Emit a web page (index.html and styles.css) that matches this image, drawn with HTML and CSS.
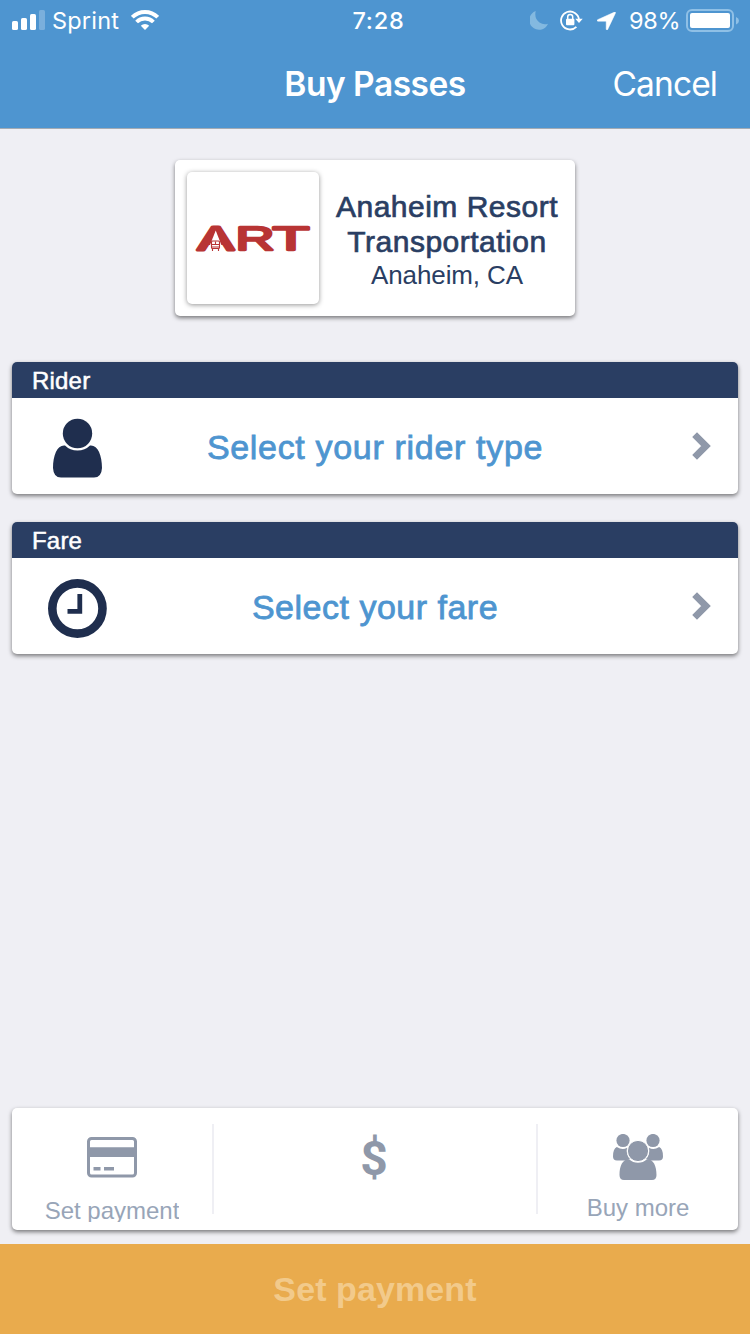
FILE: index.html
```html
<!DOCTYPE html>
<html lang="en">
<head>
<meta charset="utf-8">
<title>Buy Passes</title>
<link rel="stylesheet" href="styles.css">
</head>
<body>
<div class="screen">
  <header class="header">
    <div class="status">
      <div class="status-left">
        <svg class="signal" width="34" height="20" viewBox="0 0 34 20" fill="#fff">
          <rect x="0" y="11" width="6" height="9" rx="1.6"/>
          <rect x="9" y="8" width="6" height="12" rx="1.6"/>
          <rect x="18" y="4" width="6" height="16" rx="1.6"/>
          <rect x="27" y="0" width="6" height="20" rx="1.6" opacity=".25"/>
        </svg>
        <span class="carrier">Sprint</span>
        <svg class="wifi" width="28" height="20" viewBox="0 0 28 20">
          <g fill="none" stroke="#fff" stroke-width="3.9">
            <path d="M1.3 7.2a18 18 0 0 1 25.4 0"/>
            <path d="M5.600 12a11.800 11.800 0 0 1 16.800 0"/>
          </g>
          <path d="M14 20l-4.2-4.2a6 6 0 0 1 8.4 0z" fill="#fff"/>
        </svg>
      </div>
      <div class="time">7:28</div>
      <div class="status-right">
        <svg class="moon" width="18" height="19" viewBox="0 0 18 19"><path d="M5.700 0A9.700 9.700 0 1 0 18 12.800Q13.500 14.300 9.500 11.500 4 7.500 5.700 0z" fill="#83b9e0"/></svg>
        <svg class="lock" width="23" height="21" viewBox="0 0 23 21">
          <path d="M16.400 16.900A9 9 0 1 1 19 9.500" fill="none" stroke="#fff" stroke-width="1.800"/>
          <path d="M15.300 8.800H22.700L19 13z" fill="#fff"/>
          <rect x="6" y="8.800" width="8.400" height="6.500" rx="1" fill="#fff"/>
          <path d="M7.700 9V7a2.500 2.500 0 0 1 5 0V9" fill="none" stroke="#fff" stroke-width="1.500"/>
        </svg>
        <svg class="arrow" width="19" height="18" viewBox="0 0 19 18"><path d="M17.600.1L.6 7.700C-.3 8.200 0 9.200.9 9.200H8.600Q9.200 9.200 9.200 9.800V17C9.200 18.100 10.300 18.300 10.700 17.400L18.400 1.200C18.800.3 18.300-.2 17.600.1z" fill="#fff" stroke="#fff" stroke-width=".5"/></svg>
        <span class="percent">98%</span>
        <svg class="battery" width="53" height="23" viewBox="0 0 53 23">
          <rect x="1" y="1" width="46" height="21" rx="5" fill="none" stroke="#8fc0e6" stroke-width="2"/>
          <rect x="4" y="4" width="40" height="15" rx="2" fill="#fff"/>
          <path d="M50 8q3 1.200 3 3.700T50 15.500z" fill="#8fc0e6"/>
        </svg>
      </div>
    </div>
    <div class="nav">
      <h1 class="title">Buy Passes</h1>
      <span class="cancel">Cancel</span>
    </div>
  </header>

  <main class="main">
    <section class="card agency">
      <div class="logo">
        <svg class="logo-art" width="116" height="44" viewBox="0 -8 116 44">
          <g class="logo-text">
            <text x="3" y="25.500" textLength="35.500" lengthAdjust="spacingAndGlyphs" stroke-width="3.200">A</text>
            <text x="40.500" y="25.500" textLength="39" lengthAdjust="spacingAndGlyphs">R</text>
            <text x="77.500" y="25.500" textLength="37" lengthAdjust="spacingAndGlyphs">T</text>
          </g>
          <path d="M20.700 6.500L12.300 28H29.100z" fill="#fff"/>
          <g fill="none" stroke="#b83434" stroke-width="1.100">
            <rect x="16.500" y="17" width="8" height="7.500" rx="1"/>
            <path d="M16 20.500h9M20.500 17.500v3M17.500 27v-2M23.500 27v-2M17 23h7"/>
          </g>
        </svg>
      </div>
      <div class="agency-info">
        <div class="agency-name">Anaheim Resort<br>Transportation</div>
        <div class="agency-city">Anaheim, CA</div>
      </div>
    </section>

    <section class="card option">
      <h2 class="option-head">Rider</h2>
      <div class="option-row">
        <svg class="option-icon" width="60" height="60" viewBox="0 0 60 60" fill="#1f2e4e">
          <circle cx="30.500" cy="15.500" r="14.700"/>
          <path d="M18 27.500Q23 32.500 30.500 32.500T43 27.500C50.500 26.500 55 37 55 50Q54.500 59.500 47 59.500H14Q6.500 59.500 6 50C6 37 10.500 26.500 18 27.500z"/>
        </svg>
        <span class="option-label rider-label">Select your rider type</span>
        <svg class="chevron" width="20" height="30" viewBox="0 0 20 30"><path d="M2.600 3.600L14 15 2.600 26.400" fill="none" stroke="#8f98a9" stroke-width="6.800"/></svg>
      </div>
    </section>

    <section class="card option">
      <h2 class="option-head">Fare</h2>
      <div class="option-row">
        <svg class="option-icon" width="60" height="60" viewBox="0 0 60 60">
          <circle cx="30.400" cy="30.500" r="25.100" fill="none" stroke="#1f2e4e" stroke-width="8.600"/>
          <path d="M32.800 16V33.300H20.500" fill="none" stroke="#1f2e4e" stroke-width="4.800"/>
        </svg>
        <span class="option-label fare-label">Select your fare</span>
        <svg class="chevron" width="20" height="30" viewBox="0 0 20 30"><path d="M2.600 3.600L14 15 2.600 26.400" fill="none" stroke="#8f98a9" stroke-width="6.800"/></svg>
      </div>
    </section>
  </main>

  <section class="card summary">
    <div class="cell">
      <svg class="card-icon" width="50" height="41" viewBox="0 0 50 41">
        <rect x="1.500" y="1.500" width="47" height="37.500" rx="3" fill="none" stroke="#8f98a9" stroke-width="3"/>
        <path d="M2 10.300h46v9.700H2zM6.500 30h7v3.500h-7zM17 30h10v3.500H17z" fill="#8f98a9"/>
      </svg>
      <span class="cell-label clipped">Set payment</span>
    </div>
    <div class="cell middle"><span class="dollar">$</span></div>
    <div class="cell">
      <svg class="group-icon" width="50" height="46" viewBox="0 0 50 46" fill="#8f98a9">
        <circle cx="10" cy="6.500" r="6.600"/><circle cx="40" cy="6.500" r="6.600"/>
        <path id="side" d="M3.800 13Q9.500 16.500 14 13.700Q12.700 20.500 17 25L13 26.500H4Q0 26.500 0 22.500Q0 14.500 3.800 13z"/>
        <use href="#side" transform="matrix(-1 0 0 1 50 0)"/>
        <circle cx="25" cy="17" r="10.600" stroke="#fff" stroke-width="1"/>
        <path d="M16 25.200Q20 28.800 25 28.800T34 25.200C40.500 25 43.500 32 43.500 41Q43.500 46 39 46H11Q6.500 46 6.500 41C6.500 32 9.500 25 16 25.200z"/>
      </svg>
      <span class="cell-label">Buy more</span>
    </div>
  </section>

  <div class="pay">Set payment</div>
</div>
</body>
</html>
```

FILE: styles.css
```css
* { box-sizing: border-box; }
body { margin: 0; background: #efeff4; font-family: "Liberation Sans", Arial, sans-serif; }
h1, h2 { margin: 0; font-weight: 400; }
svg { display: block; flex: none; }

.screen { width: 750px; height: 1334px; display: flex; flex-direction: column; overflow: hidden; }

.header { height: 129px; background: #4e95d0; border-bottom: 1px solid #a3abb4; color: #fff; font-family: Inter, sans-serif; }
.status { height: 40px; display: grid; grid-template-columns: 1fr auto 1fr; align-items: center; padding: 0 11px 0 12px; font-size: 23.5px; line-height: 40px; }
.status-left, .status-right { display: flex; align-items: center; }
.status-right { justify-content: flex-end; }
.signal, .wifi { margin-bottom: 2px; }
.carrier { margin-left: 6px; padding-top: 1px; width: 67px; letter-spacing: .2px; white-space: nowrap; }
.wifi { margin-left: 12px; }
.time { padding: 1px 0 0 6px; font-weight: 500; letter-spacing: .8px; }
.lock { margin-left: 12px; }
.arrow { margin-left: 14px; }
.percent { margin-left: 13px; padding-top: 1px; width: 51px; letter-spacing: -.3px; white-space: nowrap; }
.battery { margin-left: 6px; }
.nav { height: 88px; display: grid; grid-template-columns: 1fr auto 1fr; align-items: center; padding: 0 33px; line-height: 88px; }
.title { grid-column: 2; font-size: 33.5px; font-weight: 600; letter-spacing: -.5px; }
.cancel { justify-self: end; font-size: 33.5px; letter-spacing: -.9px; }

.main { flex: 1; display: flex; flex-direction: column; align-items: center; padding: 31px 12px 0; }
.card { background: #fff; border-radius: 5px; box-shadow: 0 2px 4px rgba(0, 0, 0, .5); }

.agency { width: 400px; height: 156px; display: flex; padding: 12px 0 12px 12px; }
.logo { flex: none; width: 132px; height: 132px; border-radius: 5px; box-shadow: 0 1px 5px rgba(0, 0, 0, .42); display: flex; align-items: center; justify-content: center; }
.logo-art { overflow: visible; }
.logo-text { font: 34px "Liberation Sans", Arial, sans-serif; fill: #b83434; stroke: #b83434; stroke-width: 2.4; stroke-linejoin: round; }
.agency-info { width: 256px; padding: 17px 0 0; color: #2a3e63; text-align: center; white-space: nowrap; }
.agency-name { font-size: 30px; line-height: 35px; letter-spacing: .5px; -webkit-text-stroke: .7px #2a3e63; }
.agency-city { font-size: 26px; line-height: 32px; letter-spacing: -.1px; }

.option { width: 100%; height: 132px; margin-top: 28px; overflow: hidden; }
.agency + .option { margin-top: 46px; }
.option-head { height: 36px; padding-left: 20px; background: #2a3e63; color: #fff; font-size: 24px; line-height: 37px; letter-spacing: .2px; -webkit-text-stroke: .5px #fff; }
.option-row { height: 96px; display: grid; grid-template-columns: 130px 1fr 130px; align-items: center; padding-top: 3px; }
.option-icon { margin-left: 35px; margin-top: 0; }
.option-label { color: #4e95d0; font-size: 34px; text-align: center; white-space: nowrap; -webkit-text-stroke: .8px #4e95d0; }
.rider-label { letter-spacing: .68px; }
.fare-label { letter-spacing: .5px; }
.chevron { justify-self: end; margin-right: 26px; margin-top: -3px; }

.summary { height: 122px; margin: 0 12px 14px; padding: 16px 0; display: grid; grid-template-columns: 200px 326px 200px; }
.cell { height: 90px; display: flex; flex-direction: column; align-items: center; }
.middle { border: solid #efeff4; border-width: 0 2px; }
.card-icon { margin-top: 13px; }
.group-icon { margin-top: 10px; }
.cell-label { flex: none; margin-top: 14px; height: 28px; font-size: 24px; line-height: 28px; color: #98a5b8; white-space: nowrap; }
.clipped { margin-top: 19px; height: 25px; overflow: hidden; }
.dollar { margin-right: 2px; padding-top: 2px; font: 700 48px/66px Roboto, sans-serif; color: #8f98a9; }

.pay { height: 90px; background: #e9ab4d; color: #f2ca8b; font-size: 34px; font-weight: 700; line-height: 91px; text-align: center; letter-spacing: .1px; }
```
